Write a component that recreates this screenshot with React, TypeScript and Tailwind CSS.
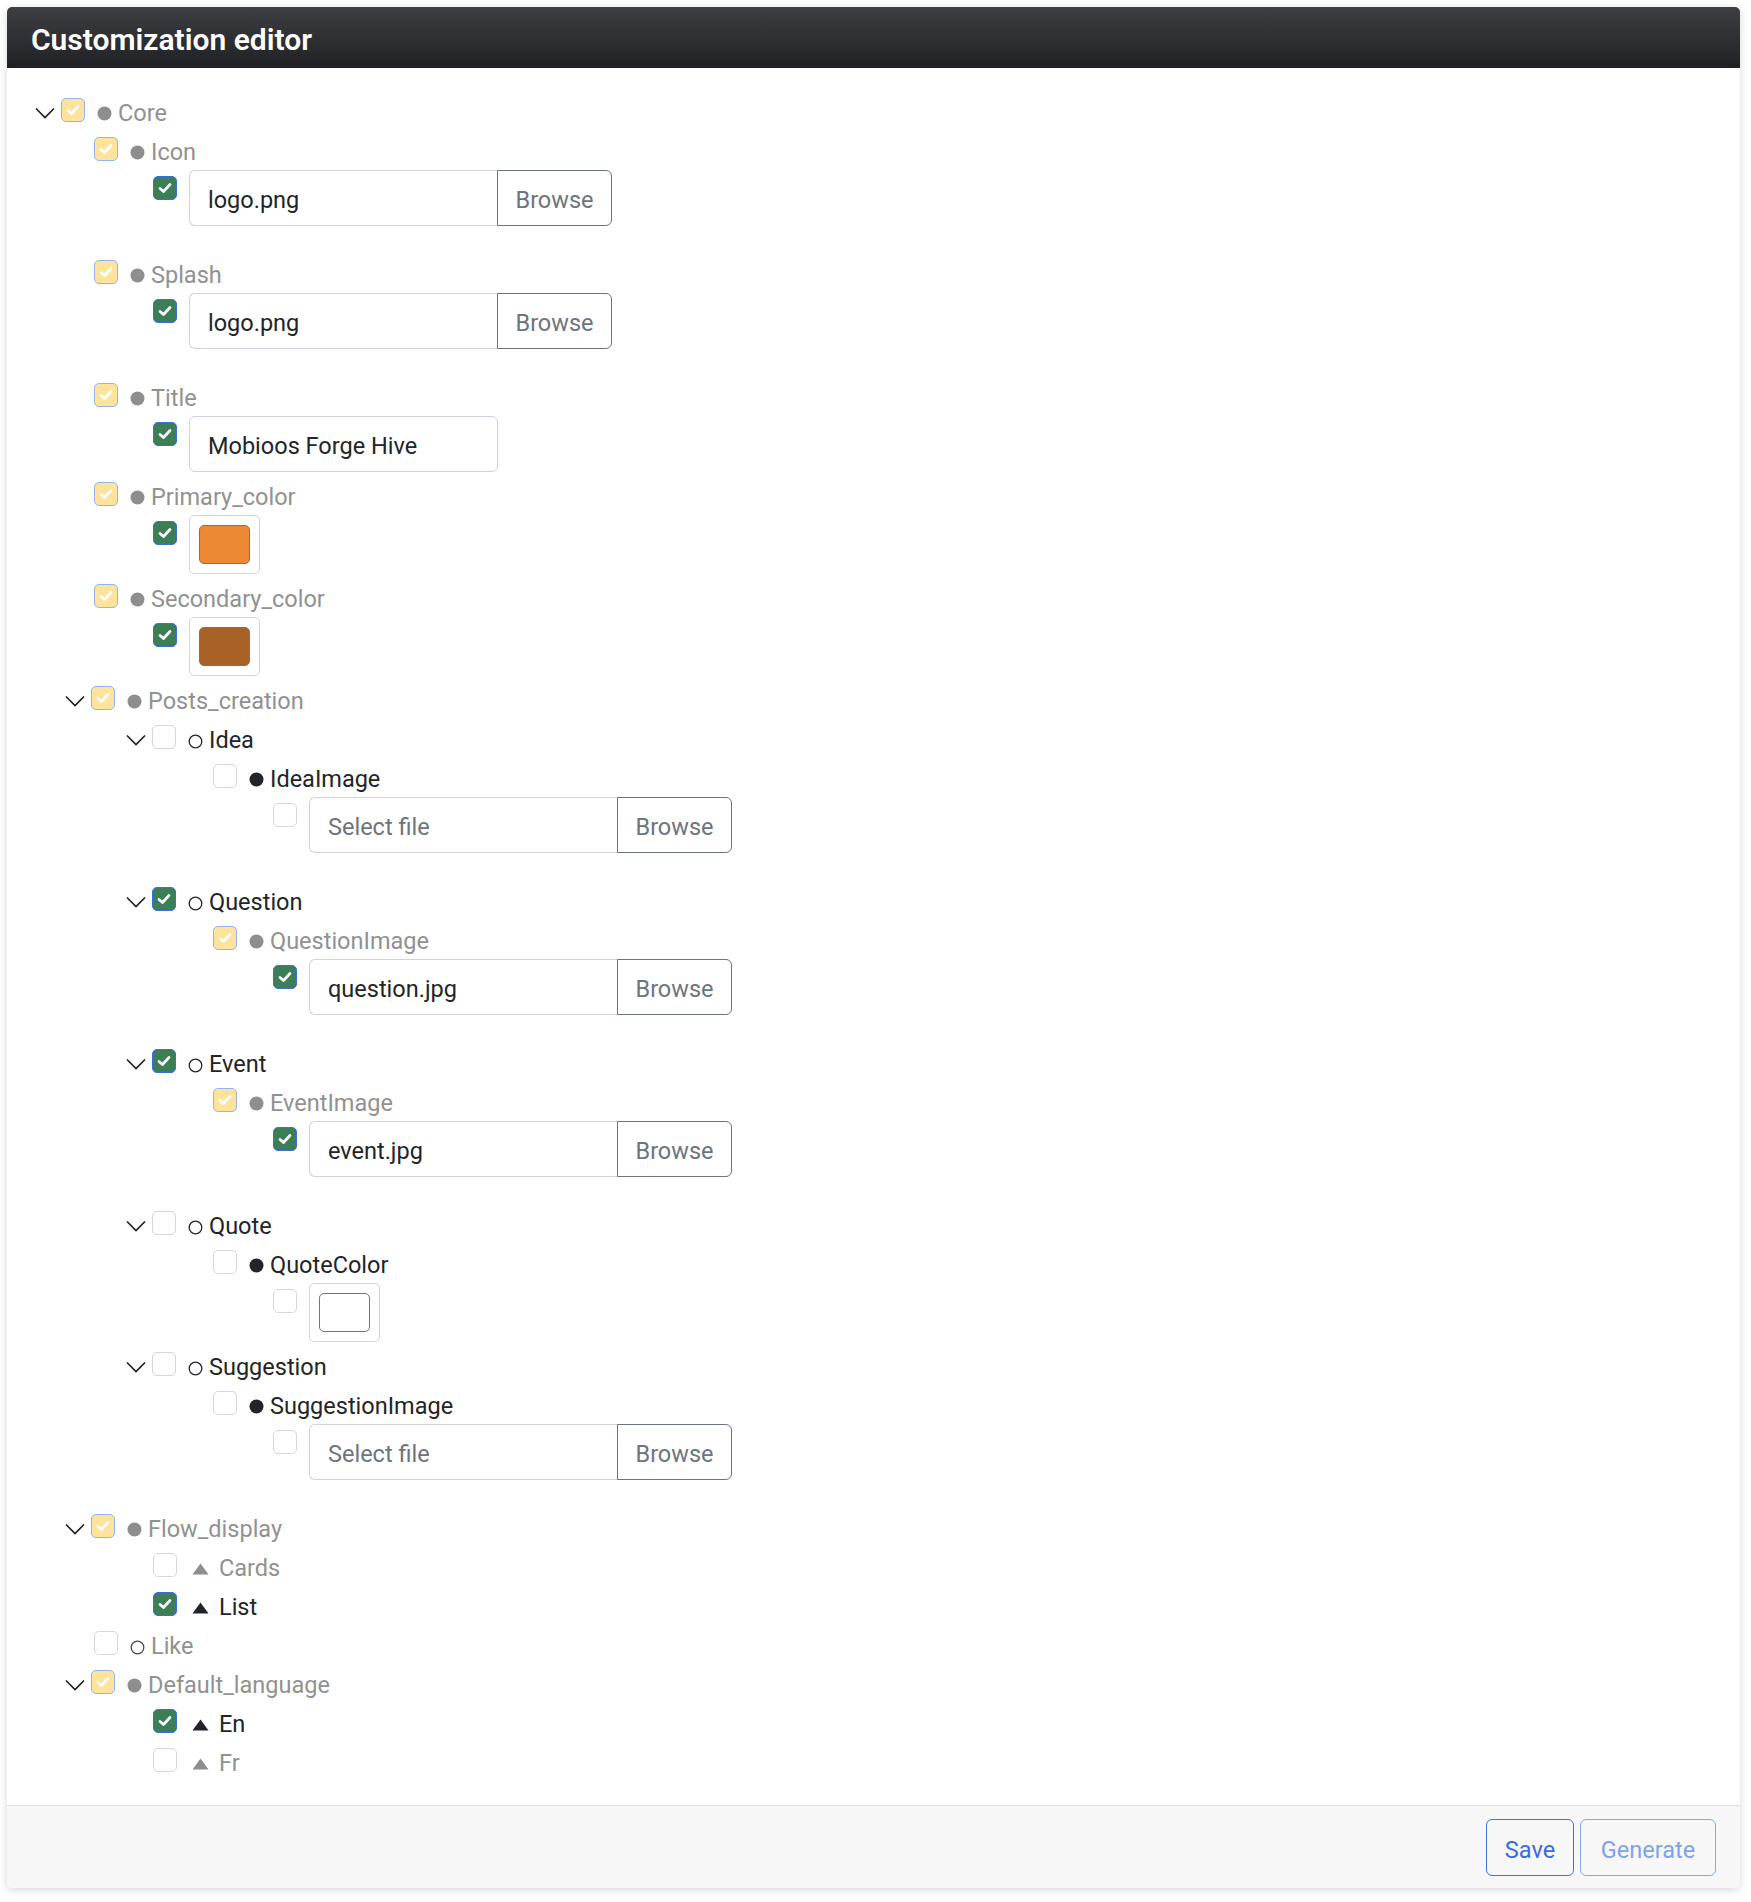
type Check = 'inherit' | 'on' | 'off';
type Mark = 'dot' | 'ring' | 'tri';
type Tone = 'muted' | 'dark';

type Item =
  | { kind: 'label'; pad: string; chevron?: boolean; check: Check; mark: Mark; tone: Tone; text: string }
  | { kind: 'file'; pad: string; check: Check; value?: string }
  | { kind: 'text'; pad: string; check: Check; value: string }
  | { kind: 'color'; pad: string; check: Check; color: string };

// left paddings per tree depth (card edge -> chevron / checkbox)
const L0C = 'pl-[28px]';
const L1C = 'pl-[58px]';
const L1 = 'pl-[87px]';
const L2C = 'pl-[119px]';
const L2 = 'pl-[146px]';
const L3 = 'pl-[206px]';
const V3 = 'pl-[266px]';

const items: Item[] = [
  { kind: 'label', pad: L0C, chevron: true, check: 'inherit', mark: 'dot', tone: 'muted', text: 'Core' },
  { kind: 'label', pad: L1, check: 'inherit', mark: 'dot', tone: 'muted', text: 'Icon' },
  { kind: 'file', pad: L2, check: 'on', value: 'logo.png' },
  { kind: 'label', pad: L1, check: 'inherit', mark: 'dot', tone: 'muted', text: 'Splash' },
  { kind: 'file', pad: L2, check: 'on', value: 'logo.png' },
  { kind: 'label', pad: L1, check: 'inherit', mark: 'dot', tone: 'muted', text: 'Title' },
  { kind: 'text', pad: L2, check: 'on', value: 'Mobioos Forge Hive' },
  { kind: 'label', pad: L1, check: 'inherit', mark: 'dot', tone: 'muted', text: 'Primary_color' },
  { kind: 'color', pad: L2, check: 'on', color: '#ed8934' },
  { kind: 'label', pad: L1, check: 'inherit', mark: 'dot', tone: 'muted', text: 'Secondary_color' },
  { kind: 'color', pad: L2, check: 'on', color: '#a86227' },
  { kind: 'label', pad: L1C, chevron: true, check: 'inherit', mark: 'dot', tone: 'muted', text: 'Posts_creation' },
  { kind: 'label', pad: L2C, chevron: true, check: 'off', mark: 'ring', tone: 'dark', text: 'Idea' },
  { kind: 'label', pad: L3, check: 'off', mark: 'dot', tone: 'dark', text: 'IdeaImage' },
  { kind: 'file', pad: V3, check: 'off' },
  { kind: 'label', pad: L2C, chevron: true, check: 'on', mark: 'ring', tone: 'dark', text: 'Question' },
  { kind: 'label', pad: L3, check: 'inherit', mark: 'dot', tone: 'muted', text: 'QuestionImage' },
  { kind: 'file', pad: V3, check: 'on', value: 'question.jpg' },
  { kind: 'label', pad: L2C, chevron: true, check: 'on', mark: 'ring', tone: 'dark', text: 'Event' },
  { kind: 'label', pad: L3, check: 'inherit', mark: 'dot', tone: 'muted', text: 'EventImage' },
  { kind: 'file', pad: V3, check: 'on', value: 'event.jpg' },
  { kind: 'label', pad: L2C, chevron: true, check: 'off', mark: 'ring', tone: 'dark', text: 'Quote' },
  { kind: 'label', pad: L3, check: 'off', mark: 'dot', tone: 'dark', text: 'QuoteColor' },
  { kind: 'color', pad: V3, check: 'off', color: '#ffffff' },
  { kind: 'label', pad: L2C, chevron: true, check: 'off', mark: 'ring', tone: 'dark', text: 'Suggestion' },
  { kind: 'label', pad: L3, check: 'off', mark: 'dot', tone: 'dark', text: 'SuggestionImage' },
  { kind: 'file', pad: V3, check: 'off' },
  { kind: 'label', pad: L1C, chevron: true, check: 'inherit', mark: 'dot', tone: 'muted', text: 'Flow_display' },
  { kind: 'label', pad: L2, check: 'off', mark: 'tri', tone: 'muted', text: 'Cards' },
  { kind: 'label', pad: L2, check: 'on', mark: 'tri', tone: 'dark', text: 'List' },
  { kind: 'label', pad: L1, check: 'off', mark: 'ring', tone: 'muted', text: 'Like' },
  { kind: 'label', pad: L1C, chevron: true, check: 'inherit', mark: 'dot', tone: 'muted', text: 'Default_language' },
  { kind: 'label', pad: L2, check: 'on', mark: 'tri', tone: 'dark', text: 'En' },
  { kind: 'label', pad: L2, check: 'off', mark: 'tri', tone: 'muted', text: 'Fr' },
];

const Checkbox = ({ state }: { state: Check }) => {
  const box =
    state === 'inherit'
      ? 'bg-[#fde39b] border-[#92b4f3]'
      : state === 'on'
        ? 'bg-[#3c7e55] border-[#3a6de2]'
        : 'bg-white border-[#d7d7d7]';
  return (
    <span className={`flex h-[24px] w-[24px] shrink-0 items-center justify-center rounded-[5px] border-[1.5px] ${box}`}>
      {state !== 'off' && (
        <svg width="14" height="12" viewBox="0 0 14 12">
          <polyline points="2,6.5 5.5,9.5 12,2.5" fill="none" stroke="#fff" strokeWidth="2.7" strokeLinecap="round" strokeLinejoin="round" />
        </svg>
      )}
    </span>
  );
};

const Chevron = () => (
  <svg width="20" height="12" viewBox="0 0 20 12" className="mr-[6px] mt-[3px] shrink-0">
    <polyline points="1,1.5 10,10.5 19,1.5" fill="none" stroke="#1c1c1c" strokeWidth="1.6" />
  </svg>
);

const Bullet = ({ mark, tone, label }: { mark: Mark; tone: Tone; label: string }) => {
  const fill = tone === 'muted' ? '#8e8e8e' : '#212529';
  if (mark === 'dot')
    return (
      <svg width="15" height="15" viewBox="0 0 15 15" className="ml-3 mt-[4px] shrink-0">
        <circle cx="7.5" cy="7.5" r="7" fill={fill} />
      </svg>
    );
  if (mark === 'ring')
    return (
      <svg width="15" height="15" viewBox="0 0 15 15" className="ml-3 mt-[5px] shrink-0">
        <circle cx="7.5" cy="7.5" r="6.3" fill="none" stroke={label === 'Like' ? '#4a4a4a' : '#212529'} strokeWidth="1.3" />
      </svg>
    );
  return (
    <svg width="17" height="12" viewBox="0 0 17 12" className="ml-[15px] mt-[5px] shrink-0">
      <polygon points="8.5,0.5 16.5,11.5 0.5,11.5" fill={fill} />
    </svg>
  );
};

const LabelRow = ({ item }: { item: Extract<Item, { kind: 'label' }> }) => (
  <div className={`flex h-[39px] items-center ${item.pad}`}>
    {item.chevron && <Chevron />}
    <span className="mb-[4px]">
      <Checkbox state={item.check} />
    </span>
    <Bullet mark={item.mark} tone={item.tone} label={item.text} />
    <span
      className={`mt-[3px] ${item.mark === 'tri' ? 'ml-[10px]' : 'ml-[6px]'} ${item.tone === 'muted' ? 'text-[#919191]' : 'text-[#212529]'}`}
    >
      {item.text}
    </span>
  </div>
);

const ValueRow = ({ item }: { item: Exclude<Item, { kind: 'label' }> }) => (
  <div className={`flex items-start ${item.pad} ${item.kind === 'file' ? 'mb-[28px]' : 'mb-[4px]'}`}>
    <span className="mt-[6px]">
      <Checkbox state={item.check} />
    </span>
    <div className="ml-3">
      {item.kind === 'file' && (
        <div className="flex h-[56px] w-[423px]">
          <div className="flex flex-1 items-center rounded-l-[6px] border border-r-0 border-[#ced4da] bg-white pt-[5px] pl-[18px]">
            {item.value ? (
              <span className="text-[#212529]">{item.value}</span>
            ) : (
              <span className="text-[#6c757d]">Select file</span>
            )}
          </div>
          <div className="flex w-[115px] items-center justify-center rounded-r-[6px] border border-[#6c757d] pt-[5px] text-[#6c757d]">
            Browse
          </div>
        </div>
      )}
      {item.kind === 'text' && (
        <div className="flex h-[56px] w-[309px] items-center rounded-[6px] border border-[#ced4da] pt-[5px] pl-[18px] text-[#212529]">
          {item.value}
        </div>
      )}
      {item.kind === 'color' && (
        <div className="h-[59px] w-[71px] rounded-[5px] border border-[#d6d6d6] p-[9px]">
          <div className="h-full w-full rounded-[5px] border border-[#747474]" style={{ backgroundColor: item.color }} />
        </div>
      )}
    </div>
  </div>
);

export default function App() {
  return (
    <div className="min-h-[1902px] bg-white pt-[7px] pl-[7px] font-['Roboto',sans-serif] text-[23.5px]">
      <div className="w-[1733px] overflow-hidden rounded-[5px] bg-white shadow-[0_2px_9px_rgba(0,0,0,0.16)]">
        <div className="flex h-[61px] items-center bg-gradient-to-b from-[#3d3f43] to-[#1f2125] pt-[3px] pl-[24px]">
          <h5 className="text-[30px] font-semibold text-white">Customization editor</h5>
        </div>

        <div className="pt-6 pb-6 leading-[39px]">
          {items.map((item, i) =>
            item.kind === 'label' ? <LabelRow key={i} item={item} /> : <ValueRow key={i} item={item} />
          )}
        </div>

        <div className="flex h-[83px] items-center justify-end border-t border-[#dedede] bg-[#f7f7f7] pr-6">
          <button className="h-[57px] w-[88px] rounded-[6px] border border-[#3a71e5] pt-[7px] text-[#3a6be0]">Save</button>
          <button className="ml-[6px] h-[57px] w-[136px] rounded-[6px] border border-[#86a9f1] pt-[7px] text-[#7fa2ee]">
            Generate
          </button>
        </div>
      </div>
    </div>
  );
}
